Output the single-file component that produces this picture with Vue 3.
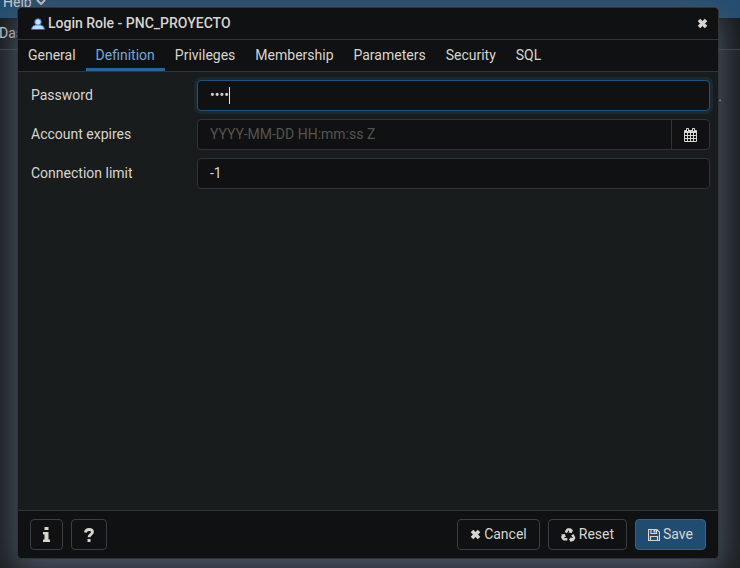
<script setup>
import { ref } from 'vue'

const tabs = ['General', 'Definition', 'Privileges', 'Membership', 'Parameters', 'Security', 'SQL']
const active = ref('Definition')
const password = ref('1234')
const expires = ref('')
const limit = ref('-1')
</script>

<template>
  <div class="page">
    <div class="backdrop" aria-hidden="true">
      <div class="menubar">
        <span>Help</span>
        <svg class="chevron" viewBox="0 0 10 6"><path d="M1 1l4 4 4-4" fill="none" stroke="currentColor" stroke-width="2" /></svg>
      </div>
      <div class="panel-tabs">Das</div>
      <div class="panel-body">.</div>
    </div>

    <section class="dialog" role="dialog" aria-labelledby="dialog-title">
      <header class="titlebar">
        <svg class="role-icon" viewBox="0 0 14 12" aria-hidden="true">
          <path d="M.5 11.5C.8 8.700 2 7.300 4.800 7L9.200 7C12 7.300 13.200 8.700 13.500 11.500z" fill="#b9dcf8" stroke="#2c68b5" />
          <circle cx="7" cy="4" r="3.300" fill="#c6e2fa" stroke="#2c68b5" />
          <path d="M4.500 7.500h5v2h-5z" fill="#c0dff9" />
        </svg>
        <h1 id="dialog-title">Login Role - PNC_PROYECTO</h1>
        <button class="close" type="button" aria-label="Close">
          <svg class="cross" viewBox="0 0 10 10"><path d="M1.800 1.800l6.400 6.400M8.200 1.800L1.800 8.200" stroke="currentColor" stroke-width="3.200" /></svg>
        </button>
      </header>

      <nav class="tabs" role="tablist">
        <button
          v-for="tab in tabs"
          :key="tab"
          type="button"
          role="tab"
          :aria-selected="tab === active"
          :class="['tab', { active: tab === active }]"
          @click="active = tab"
        >{{ tab }}</button>
      </nav>

      <form id="role-form" class="fields" @submit.prevent>
        <div class="row">
          <label for="password">Password</label>
          <div class="control focused">
            <input id="password" v-model="password" type="password" autocomplete="off" />
            <span class="caret"></span>
          </div>
        </div>
        <div class="row">
          <label for="expires">Account expires</label>
          <div class="control">
            <input id="expires" v-model="expires" type="text" placeholder="YYYY-MM-DD HH:mm:ss Z" />
            <button class="picker" type="button" aria-label="Choose date">
              <svg class="calendar" viewBox="0 0 13 14">
                <path d="M0 3q0-1 1-1h11q1 0 1 1v10q0 1-1 1H1q-1 0-1-1z" fill="currentColor" />
                <path d="M1 5h2v2H1zM4 5h2v2H4zM7 5h2v2H7zM10 5h2v2h-2zM1 8h2v2H1zM4 8h2v2H4zM7 8h2v2H7zM10 8h2v2h-2zM1 11h2v2H1zM4 11h2v2H4zM7 11h2v2H7zM10 11h2v2h-2z" fill="#0f1112" />
                <path d="M2 .7q0-.7.700-.7h1.600q.7 0 .7.700V4H2zM8 .7q0-.7.700-.7h1.600q.7 0 .7.700V4H8z" fill="currentColor" />
                <path d="M3 1h1v2H3zM9 1h1v2H9z" fill="#0f1112" />
              </svg>
            </button>
          </div>
        </div>
        <div class="row">
          <label for="limit">Connection limit</label>
          <div class="control">
            <input id="limit" v-model="limit" type="text" inputmode="numeric" />
          </div>
        </div>
      </form>

      <footer class="actions">
        <button class="btn" type="button" aria-label="Information">
          <svg class="glyph-info" viewBox="0 0 7 15"><path d="M1.500 0h4v3h-4zM0 5h5.500v7.500H7V15H0v-2.500h1.500v-5H0z" fill="currentColor" /></svg>
        </button>
        <button class="btn" type="button" aria-label="Help">
          <svg class="glyph-help" viewBox="0 0 10 14"><path d="M1.300 4.500C1.800 2.400 3 1.500 5 1.500c2.100 0 3.500 1 3.500 2.600C8.500 6.500 5 6.300 5 9.300" fill="none" stroke="currentColor" stroke-width="2.800" /><path d="M3.500 11h3v3h-3z" fill="currentColor" /></svg>
        </button>
        <span class="spacer"></span>
        <button class="btn" type="button">
          <svg class="cross" viewBox="0 0 10 10"><path d="M1.800 1.800l6.400 6.400M8.200 1.800L1.800 8.200" stroke="currentColor" stroke-width="3.200" /></svg>
          Cancel
        </button>
        <button class="btn" type="reset" form="role-form">
          <svg class="recycle" viewBox="0 0 14 14">
            <g fill="currentColor">
              <path id="recycle-arrow" d="M3.200 4L4.900 1.100Q5.500.2 6.500.2H8.700Q9.500.2 10 1L10.600 2 11.700 1.400 10.300 5 6.600 4.500 7.800 3.800 6.900 2.300 5.500 5.200z" />
              <use href="#recycle-arrow" transform="rotate(120 7 7.500)" />
              <use href="#recycle-arrow" transform="rotate(240 7 7.500)" />
            </g>
          </svg>
          Reset
        </button>
        <button class="btn primary" type="submit" form="role-form">
          <svg class="disk" viewBox="0 0 12 12"><path d="M.5.5h8.300l2.700 2.700v8.300H.5zM2.500 11.500v-4h7v4M3 .5v4h5.500V.5" fill="none" stroke="currentColor" stroke-width="1.200" /><path d="M5.500 1h2v2.500h-2z" fill="currentColor" /></svg>
          Save
        </button>
      </footer>
    </section>
  </div>
</template>

<style>
body {
  background: #1b1e20;
}
</style>

<style scoped>
.page {
  position: relative;
  display: flex;
  box-sizing: border-box;
  min-height: 100vh;
  padding: 7px 21px 9px 17px;
  overflow: hidden;
  font: 14px/21px Roboto, sans-serif;
  color: #d8d4cf;
}

.backdrop {
  position: absolute;
  inset: 0;
  display: flex;
  flex-direction: column;
  background: #1b1e20;
}

.menubar {
  display: flex;
  align-items: center;
  gap: 4px;
  height: 18px;
  padding-left: 3px;
  box-sizing: border-box;
  padding-bottom: 14px;
  background: #234d70;
}

.chevron {
  width: 10px;
  height: 6px;
}

.panel-tabs {
  height: 31px;
  margin-left: -1px;
  line-height: 31px;
  border-bottom: 1px solid #3a3e40;
  background: #16191a;
}

.panel-body {
  flex: 1;
  padding: 36px 18px 0 0;
  text-align: right;
}

.dialog {
  position: relative;
  flex: 1;
  display: flex;
  flex-direction: column;
  min-width: 0;
  border: 1px solid #303436;
  border-radius: 5px;
  background: #181c1d;
  box-shadow: 0 8px 32px 2px #505a6c;
  overflow: hidden;
}

.titlebar {
  display: flex;
  align-items: center;
  height: 31px;
  padding: 0 10px 0 13px;
  border-bottom: 1px solid #303436;
  background: #0f1112;
}

.role-icon {
  width: 14px;
  height: 12px;
  margin-right: 3px;
}

h1 {
  flex: 1;
  margin: 0;
  font-size: 14px;
  font-weight: 500;
}

button,
input {
  font: inherit;
  color: inherit;
}

.close {
  display: flex;
  padding: 0;
  border: 0;
  background: none;
}

.cross {
  width: 11px;
  height: 11px;
}

.tabs {
  display: flex;
  height: 31px;
  border-bottom: 1px solid #303436;
  background: #0f1112;
}

.tab {
  padding: 2px 10px 0;
  border: 0;
  border-bottom: 3px solid transparent;
  background: none;
}

.tab.active {
  color: #75a9d8;
  border-bottom-color: #28659a;
}

.fields {
  flex: 1;
  display: flex;
  flex-direction: column;
  gap: 8px;
  padding: 8px 8px 8px 13px;
}

.row {
  display: grid;
  grid-template-columns: 166px 1fr;
  align-items: center;
}

.control {
  position: relative;
  display: flex;
  height: 31px;
  box-sizing: border-box;
  border: 1px solid #303436;
  border-radius: 4px;
  background: #0f1112;
}

.control.focused {
  border-color: #225380;
  box-shadow: 0 0 0 3px #1a2831;
}

input {
  flex: 1;
  min-width: 0;
  padding: 0 12px;
  border: 0;
  outline: 0;
  background: none;
}

input::placeholder {
  color: #56544e;
  opacity: 1;
}

.caret {
  position: absolute;
  left: 31px;
  top: 6px;
  width: 1px;
  height: 17px;
  background: #e8e6e3;
}

.picker {
  display: flex;
  align-items: center;
  padding: 0 12px;
  border: 0;
  border-left: 1px solid #303436;
  background: none;
}

.calendar {
  width: 13px;
  height: 14px;
}

.actions {
  display: flex;
  align-items: center;
  gap: 8px;
  padding: 8px 12px;
  border-top: 1px solid #303436;
  background: #0f1112;
}

.spacer {
  flex: 1;
}

.btn {
  display: flex;
  align-items: center;
  justify-content: center;
  gap: 3px;
  height: 31px;
  padding: 0 12px;
  border: 1px solid #3b3f42;
  border-radius: 4px;
  background: #0f1112;
}

.btn.primary {
  border-color: #28659a;
  background: #214c71;
}

.glyph-info {
  width: 7px;
  height: 15px;
}

.glyph-help {
  width: 10px;
  height: 14px;
}

.recycle {
  width: 15px;
  height: 14px;
}

.disk {
  width: 12px;
  height: 12px;
}
</style>
